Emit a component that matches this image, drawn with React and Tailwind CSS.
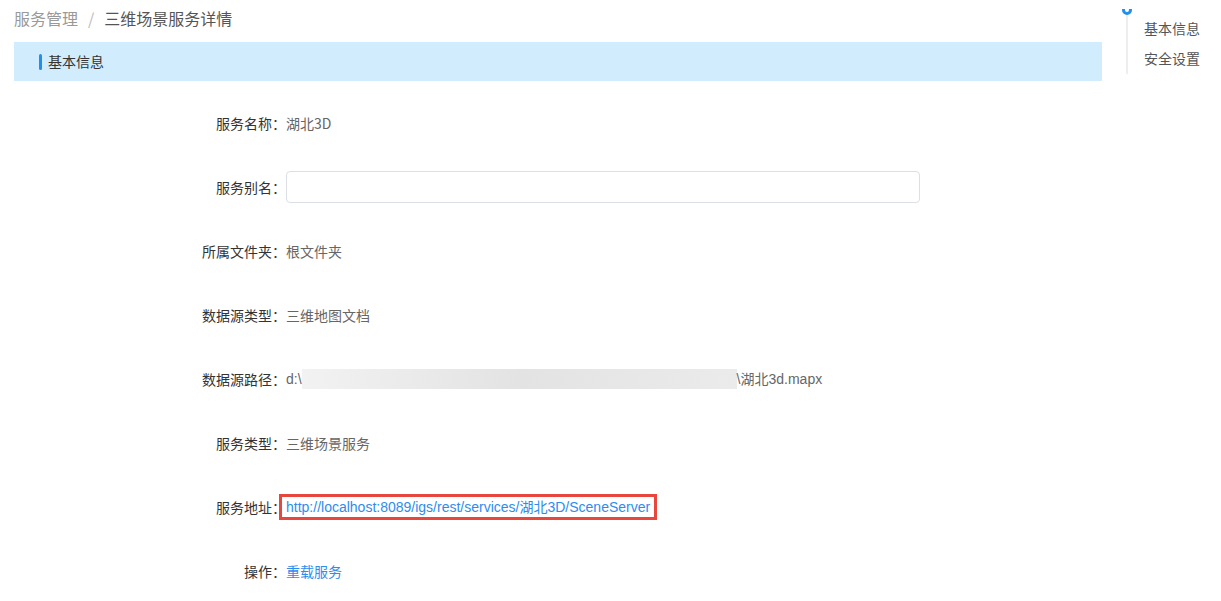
import React from 'react';

const font = { fontFamily: '"Noto Sans CJK SC", "Noto Sans", sans-serif' };
const latin = { fontFamily: '"Liberation Sans", "Noto Sans CJK SC", sans-serif' };

const Row = ({ label, children }) => (
  <div className="flex h-16 items-center">
    <div className="w-[272px] shrink-0 text-right text-[14px] text-[#333]">{label}：</div>
    <div className="flex items-center text-[14px] text-[#666]">{children}</div>
  </div>
);

const App = () => {
  return (
    <div className="flex w-[1221px] h-[601px] overflow-hidden bg-white" style={font}>
      <div className="w-[1102px] pl-[14px] shrink-0">
        <div className="pt-[6px] mb-[12px] h-[30px] leading-[24px] text-[16px]">
          <span className="text-[#999]">服务管理</span>
          <span className="text-[#bbb] mx-[10px]">/</span>
          <span className="text-[#555]">三维场景服务详情</span>
        </div>
        <div className="flex h-[39px] items-center bg-[#d1ecfd] pl-[25px]">
          <span className="w-[3px] h-[16px] bg-[#1f8ff0] rounded-sm mr-[6px]" />
          <span className="text-[14px] text-[#333]">基本信息</span>
        </div>
        <div className="pt-[10px]">
          <Row label="服务名称">湖北3D</Row>
          <Row label="服务别名">
            <input className="w-[634px] h-[32px] border border-[#dcdfe6] rounded-[4px] outline-none px-3" />
          </Row>
          <Row label="所属文件夹">根文件夹</Row>
          <Row label="数据源类型">三维地图文档</Row>
          <Row label="数据源路径">
            <span style={latin}>d:\</span>
            <span className="w-[435px] h-[20px] bg-gradient-to-r from-[#f2f2f2] via-[#e3e3e3] to-[#ebebeb]" />
            <span style={latin}>\湖北3d.mapx</span>
          </Row>
          <Row label="服务类型">三维场景服务</Row>
          <Row label="服务地址">
            <a
              className="-ml-[7px] border-[3px] border-[#e8473d] px-[4px] leading-[20px] text-[#2d8cf0]"
              style={latin}
            >
              http://localhost:8089/igs/rest/services/湖北3D/SceneServer
            </a>
          </Row>
          <Row label="操作">
            <a className="text-[#2d8cf0]">重载服务</a>
          </Row>
        </div>
      </div>
      <div className="pl-[24px] pt-[12px]">
        <div className="relative flex flex-col gap-[10px] pl-[16px] pt-[6px] pb-[6px] border-l-2 border-[#eee]">
          <span className="absolute -left-[6px] -top-[3px] w-[10px] h-[6px] overflow-hidden">
            <span className="block w-[10px] h-[10px] -mt-[4px] rounded-full border-[3px] border-[#1f8ff0]" />
          </span>
          <span className="text-[14px] text-[#555] leading-[20px]">基本信息</span>
          <span className="text-[14px] text-[#555] leading-[20px]">安全设置</span>
        </div>
      </div>
    </div>
  );
};

export default App;
